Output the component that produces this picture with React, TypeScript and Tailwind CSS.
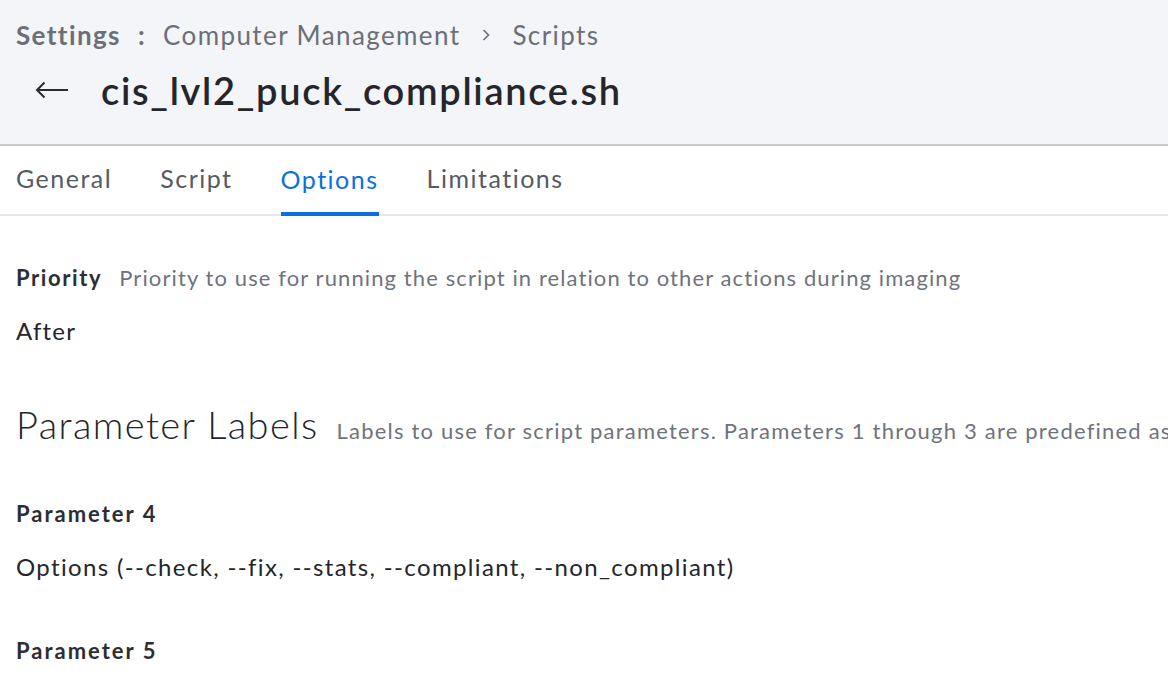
import React from 'react'

const font = { fontFamily: 'Lato, "Noto Sans", sans-serif' }

const tabs = ['General', 'Script', 'Options', 'Limitations']

const App = () => {
  return (
    <div className="min-h-screen w-[1168px] bg-white overflow-hidden" style={font}>
      <header className="h-[146px] bg-[#f4f5f9] border-b-2 border-[#c9cbd3] px-4 pt-[18px]">
        <nav className="flex items-center h-[34px] text-[26px] tracking-[1.4px] text-[#6b6f78] whitespace-nowrap">
          <span className="font-bold">Settings</span>
          <span className="font-bold mx-[17px]">:</span>
          <span>Computer Management</span>
          <svg className="mx-[19px]" width="14" height="14" viewBox="0 0 14 14" fill="none">
            <path d="M4.5 2 L9.5 7 L4.5 12" stroke="#6b6f78" strokeWidth="1.6" />
          </svg>
          <span>Scripts</span>
        </nav>
        <div className="flex items-center mt-[16px] h-[44px]">
          <svg className="ml-[19px] mr-[32px]" width="34" height="18" viewBox="0 0 34 18" fill="none">
            <path d="M33 9 H2 M9.5 1.5 L2 9 L9.5 16.5" stroke="#2a2c31" strokeWidth="2" />
          </svg>
          <h1 className="text-[38px] tracking-[1.7px] font-semibold text-[#24262b] whitespace-nowrap">cis_lvl2_puck_compliance.sh</h1>
        </div>
      </header>

      <div className="flex h-[70px] border-b-2 border-[#e6e7eb] px-4 gap-[48px]">
        {tabs.map(t => (
          <div
            key={t}
            className={
              t === 'Options'
                ? 'flex items-center text-[25px] tracking-[1.5px] text-[#0b6fe3] border-b-4 border-[#0b6fe3] mb-[-2px] pt-[2px]'
                : 'flex items-center text-[25px] tracking-[1.5px] text-[#565a63] pb-[2px]'
            }
          >
            {t}
          </div>
        ))}
      </div>

      <main className="px-4 pt-[45px] whitespace-nowrap">
        <div className="flex items-baseline gap-[17px]">
          <span className="text-[22px] tracking-[1.6px] font-bold text-[#2c2e33]">Priority</span>
          <span className="text-[22px] tracking-[1.1px] text-[#6f737b]">Priority to use for running the script in relation to other actions during imaging</span>
        </div>
        <div className="text-[24px] tracking-[1.2px] text-[#24262b] mt-[19px]">After</div>

        <div className="flex items-baseline gap-[18px] mt-[47px]">
          <h2 className="text-[38px] tracking-[1.4px] font-light text-[#24262b]">Parameter Labels</h2>
          <span className="text-[22px] tracking-[1.2px] text-[#6f737b]">Labels to use for script parameters. Parameters 1 through 3 are predefined as mount point, computer name, and username</span>
        </div>

        <div className="text-[22px] tracking-[2px] font-bold text-[#2c2e33] mt-[44px]">Parameter 4</div>
        <div className="text-[24px] tracking-[1.35px] text-[#24262b] mt-[19px]">Options (--check, --fix, --stats, --compliant, --non_compliant)</div>

        <div className="text-[22px] tracking-[2px] font-bold text-[#2c2e33] mt-[49px]">Parameter 5</div>
      </main>
    </div>
  )
}

export default App
